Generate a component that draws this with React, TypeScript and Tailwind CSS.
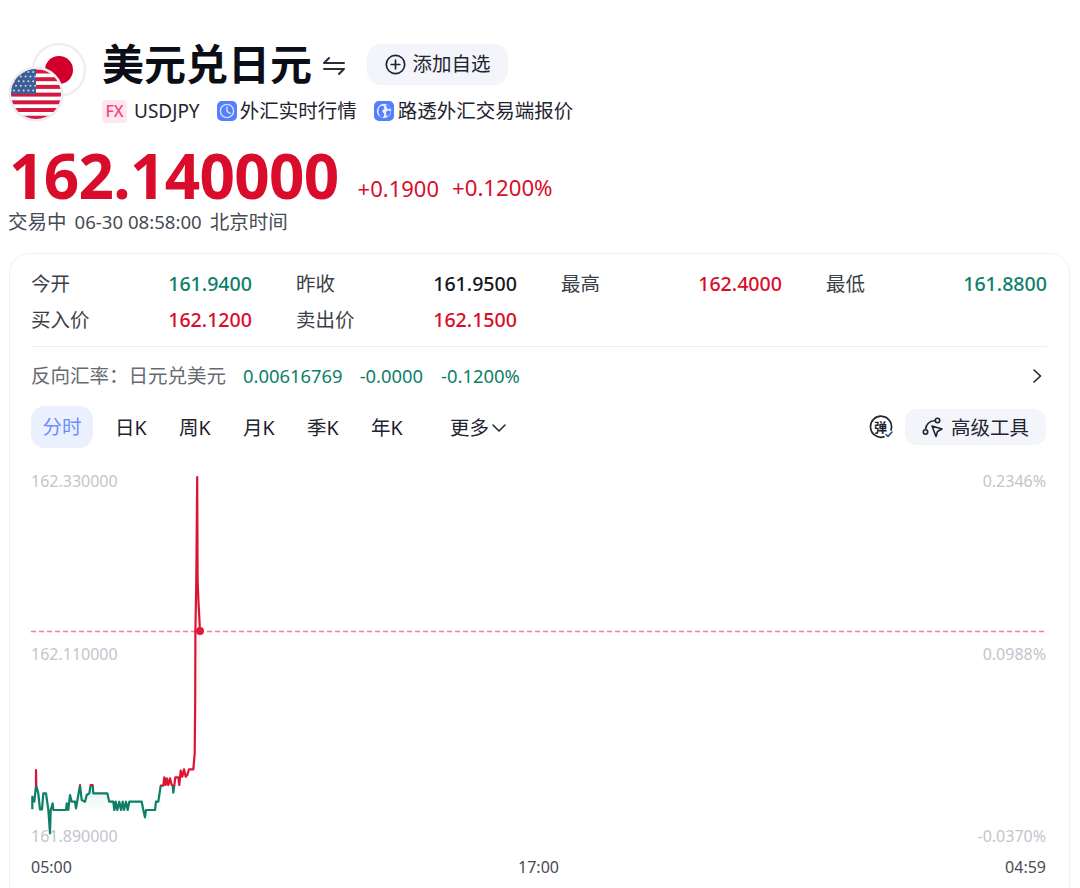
import React from "react";

const toAbs = (pts: number[][]) => pts.map(([x, y]) => [20 + x / 3, 740 + y / 3]);

const low = toAbs([
  [37, 208], [37, 170], [43, 185], [48, 137], [48, 90], [49, 137], [55, 160], [60, 208], [66, 208], [70, 160], [78, 160], [85, 208], [90, 280], [92, 210], [98, 190], [100, 210],
  [138, 210], [140, 190], [145, 210], [150, 165], [155, 185], [165, 185], [168, 205], [175, 165], [180, 135], [185, 180], [195, 185], [200, 165], [208, 160], [212, 135], [218, 135], [220, 160],
  [262, 160], [268, 185], [280, 185], [283, 210], [287, 185], [292, 210], [298, 185], [303, 210], [308, 185], [312, 210], [318, 185], [323, 210], [328, 185], [365, 185], [370, 210], [375, 232], [378, 210],
  [405, 210], [408, 185], [415, 185], [422, 137], [430, 137], [433, 112], [437, 135], [440, 115], [445, 135], [450, 115], [455, 135], [458, 137], [460, 158], [463, 137], [466, 112], [475, 112], [478, 135], [482, 92], [487, 110], [492, 88], [497, 110], [502, 105], [507, 88], [520, 88], [524, 40],
]);
const all = [...low, [195.2, 700], [195.4, 630], [196.3, 580], [197.2, 477], [197.6, 580], [198.4, 600], [200, 631]];
const line = all.map(([x, y], i) => `${i ? "L" : "M"}${x.toFixed(1)} ${y.toFixed(1)}`).join(" ");
const area = `${line} L200 850 L32 850 Z`;

function Flags() {
  return (
    <svg width="80" height="80" viewBox="0 0 80 80" className="shrink-0">
      <defs>
        <clipPath id="usa"><circle cx="28" cy="51" r="25" /></clipPath>
      </defs>
      <circle cx="51" cy="27" r="26" fill="#fff" stroke="#eeeeef" strokeWidth="2.5" />
      <circle cx="51" cy="27" r="14" fill="#d0002b" />
      <circle cx="28" cy="51" r="27.5" fill="#ecedf0" />
      <g clipPath="url(#usa)">
        <rect x="3" y="26" width="50" height="50" fill="#fff" />
        {[0, 1, 2, 3, 4, 5, 6].map((i) => (
          <rect key={i} x="3" y={26.5 + i * 7.7} width="50" height="4" fill="#d6193f" />
        ))}
        <rect x="3" y="26" width="25" height="25" fill="#3c5e94" />
        {[0, 1, 2, 3, 4].map((r) =>
          [0, 1, 2, 3, 4].map((c) => (
            <circle key={`${r}${c}`} cx={6 + c * 4.8 + (r % 2) * 2} cy={29 + r * 4.6} r="1" fill="#cfdaea" />
          ))
        )}
      </g>
    </svg>
  );
}

function Clock() {
  return (
    <svg width="20" height="20" viewBox="0 0 20 20" className="shrink-0">
      <rect width="20" height="20" rx="5" fill="#527eff" />
      <circle cx="10" cy="10" r="6.6" fill="none" stroke="#d5e0ff" strokeWidth="1.4" />
      <path d="M10 6V10.4L13.2 12.4" fill="none" stroke="#d5e0ff" strokeWidth="1.4" strokeLinecap="round" strokeLinejoin="round" />
    </svg>
  );
}

function Globe() {
  return (
    <svg width="20" height="20" viewBox="0 0 20 20" className="shrink-0">
      <rect width="20" height="20" rx="5" fill="#527eff" />
      <circle cx="10" cy="10" r="7.2" fill="#e6edff" />
      <path d="M6 5.4C8.6 3.8 10.6 5.2 10.2 7.2C9.8 9 8 8.8 8.4 10.4C8.8 12 10.6 12 10 14.4C9.7 15.6 9 16.6 8.2 16.8C5 15 3 9.4 6 5.4ZM12.2 3.4C14 3.9 15.6 5.2 16.4 7C15.2 8.8 13 8.2 12.8 6.6C12.7 5.6 12 4.6 12.2 3.4ZM13 10C14.2 9.6 16.4 10 17 10.6C16.6 12.8 15 14.8 13.2 15.6C12 14 11.6 11 13 10Z" fill="#527eff" />
    </svg>
  );
}

function Chevron({ className }: { className?: string }) {
  return (
    <svg width="16" height="16" viewBox="0 0 16 16" className={className}>
      <path d="M2 5L8 11L14 5" fill="none" stroke="#1f2430" strokeWidth="1.5" strokeLinecap="round" strokeLinejoin="round" />
    </svg>
  );
}

const stats = [
  ["今开", "161.9400", "text-[#0d7f68]"],
  ["昨收", "161.9500", "text-[#14171f]"],
  ["最高", "162.4000", "text-[#d90d2b]"],
  ["最低", "161.8800", "text-[#0d7f68]"],
  ["买入价", "162.1200", "text-[#d90d2b]"],
  ["卖出价", "162.1500", "text-[#d90d2b]"],
];

const tabs = ["日K", "周K", "月K", "季K", "年K"];

export default function App() {
  return (
    <div className="w-[1080px] h-[888px] overflow-hidden bg-white pl-[9px] pr-[10px] pt-[43px] text-[#1f2430] font-['Noto_Sans','Noto_Sans_CJK_SC',sans-serif]">
      <div className="flex h-[81px]">
        <div className="-ml-[1px] w-[94px] shrink-0"><Flags /></div>
        <div className="flex flex-col">
          <div className="flex items-center h-[42px]">
            <h1 className="text-[42px] leading-[42px] font-bold text-[#0b0e17]">美元兑日元</h1>
            <svg width="24" height="20" viewBox="0 0 24 20" className="ml-[10px] mt-[3px]">
              <path d="M7 2L2 7H22M17 18L22 13H2" fill="none" stroke="#2a2e38" strokeWidth="2" strokeLinecap="round" strokeLinejoin="round" />
            </svg>
            <button className="ml-[21px] h-[41px] w-[141px] rounded-[14px] bg-[#f3f5fa] flex items-center justify-center gap-[7px] text-[19.5px]">
              <svg width="21" height="21" viewBox="0 0 21 21">
                <circle cx="10.5" cy="10.5" r="9.2" fill="none" stroke="#1f2430" strokeWidth="1.7" />
                <path d="M10.5 6.2V14.8M6.2 10.5H14.8" stroke="#1f2430" strokeWidth="1.7" strokeLinecap="round" />
              </svg>
              添加自选
            </button>
          </div>
          <div className="flex items-center mt-[14px] h-[24px] text-[19.5px] leading-[24px] whitespace-nowrap">
            <span className="w-[25px] h-[23px] rounded-[4px] bg-[#ffe7ef] text-[#f2447f] text-[16px] leading-[23px] text-center font-medium">FX</span>
            <span className="ml-[7px] text-[19px]">USDJPY</span>
            <span className="ml-[17px]"><Clock /></span>
            <span className="ml-[3px]">外汇实时行情</span>
            <span className="ml-[17px]"><Globe /></span>
            <span className="ml-[4px]">路透外汇交易端报价</span>
          </div>
        </div>
      </div>

      <div className="flex items-start h-[60px] mt-[20px] text-[#d90d2b] whitespace-nowrap">
        <span className="text-[62px] leading-[62px] font-bold tracking-[-0.7px]">162.140000</span>
        <span className="ml-[19px] mt-[30px] text-[22px] leading-[28px]">+0.1900</span>
        <span className="ml-[13px] mt-[30px] text-[22.2px] leading-[28px]">+0.1200%</span>
      </div>
      <div className="flex mt-[5px] text-[19.5px] leading-[26px] text-[#474b55] whitespace-nowrap">
        <span className="-ml-[1px]">交易中</span>
        <span className="ml-[8px] text-[18.6px]">06-30 08:58:00</span>
        <span className="ml-[8px]">北京时间</span>
      </div>

      <div className="mt-[18px] rounded-[20px] border border-[#f1f1f3] pl-[21px] pr-[22px] pt-[16px] h-[700px]">
        <div className="grid grid-cols-4 gap-x-[44px] gap-y-[8px] pb-[12px] border-b border-[#eeeeef]">
          {stats.map(([label, value, color]) => (
            <div key={label} className="flex justify-between h-[28px] items-center">
              <span className="text-[#3c3f48] text-[19.5px]">{label}</span>
              <span className={`font-medium text-[19.6px] ${color}`}>{value}</span>
            </div>
          ))}
        </div>

        <div className="flex items-center h-[57px] text-[18.4px] whitespace-nowrap">
          <span className="text-[#666a73] text-[19.5px]">反向汇率：日元兑美元</span>
          <span className="ml-[17px] text-[#0d7f68]">0.00616769</span>
          <span className="ml-[17px] text-[#0d7f68]">-0.0000</span>
          <span className="ml-[18px] text-[#0d7f68]">-0.1200%</span>
          <svg width="12" height="16" viewBox="0 0 12 16" className="ml-auto mr-[4px]">
            <path d="M3 2L9.5 8L3 14" fill="none" stroke="#1f2430" strokeWidth="1.6" strokeLinecap="round" strokeLinejoin="round" />
          </svg>
        </div>

        <div className="flex items-center h-[42px] mt-[2px] text-[19.5px] whitespace-nowrap">
          <span className="w-[62px] h-[42px] rounded-[14px] bg-[#ebf0ff] text-[#6d8dfb] flex items-center justify-center">分时</span>
          <div className="flex ml-[22px] gap-[32px] pt-[2px]">
            {tabs.map((t) => (
              <span key={t} className="w-[32px]">{t}</span>
            ))}
          </div>
          <span className="ml-[47px] pt-[2px]">更多</span>
          <Chevron className="ml-[2px] mt-[2px]" />
          <svg width="24" height="24" viewBox="0 0 24 24" className="ml-auto mr-[12px]">
            <path d="M15 21.8A10.5 10.5 0 1 1 22 15" fill="none" stroke="#1f2430" strokeWidth="1.7" strokeLinecap="round" />
            <path d="M17 19.5L19 21.5L23 17" fill="none" stroke="#2b4a8c" strokeWidth="1.6" strokeLinecap="round" strokeLinejoin="round" />
            <text x="11.5" y="16.5" textAnchor="middle" fontSize="13" fontWeight="700" fill="#1f2430">弹</text>
          </svg>
          <div className="w-[141px] mr-[1px] h-[36px] rounded-[12px] bg-[#f3f5fa] flex items-center justify-center gap-[7px] pt-[1px]">
            <svg width="22" height="22" viewBox="0 0 22 22">
              <circle cx="15.5" cy="3.5" r="2.2" fill="none" stroke="#1f2430" strokeWidth="1.6" />
              <circle cx="3.5" cy="15" r="2.2" fill="none" stroke="#1f2430" strokeWidth="1.6" />
              <path d="M13 3.5C7.5 4 4 7.5 3.5 12.7" fill="none" stroke="#1f2430" strokeWidth="1.6" />
              <path d="M10 9L20 12L15.5 14.5L14 19.5Z" fill="none" stroke="#1f2430" strokeWidth="1.6" strokeLinejoin="round" />
            </svg>
            高级工具
          </div>
        </div>

        <div className="relative h-[380px] mt-[22px] w-[1015px]">
          <svg width="1015" height="380" viewBox="31 470 1015 380" className="block">
            <defs>
              <linearGradient id="fillG" gradientUnits="userSpaceOnUse" x1="0" y1="786" x2="0" y2="812">
                <stop offset="0" stopColor="#0d7f68" stopOpacity="0.12" />
                <stop offset="1" stopColor="#0d7f68" stopOpacity="0" />
              </linearGradient>
              <linearGradient id="fillR" gradientUnits="userSpaceOnUse" x1="0" y1="477" x2="0" y2="786">
                <stop offset="0" stopColor="#d90d2b" stopOpacity="0.1" />
                <stop offset="1" stopColor="#d90d2b" stopOpacity="0" />
              </linearGradient>
              <clipPath id="above"><rect x="31" y="470" width="200" height="316" /></clipPath>
              <clipPath id="below"><rect x="31" y="786" width="200" height="64" /></clipPath>
              <clipPath id="belowFill"><rect x="31" y="786" width="130" height="30" /></clipPath>
            </defs>
            <path d={area} fill="url(#fillG)" clipPath="url(#belowFill)" />
            <path d={area} fill="url(#fillR)" clipPath="url(#above)" />
            <line x1="31" y1="631.5" x2="1046" y2="631.5" stroke="#f2808c" strokeWidth="1.4" strokeDasharray="5 3" />
            <path d={line} fill="none" stroke="#dc1434" strokeWidth="2.2" strokeLinejoin="round" clipPath="url(#above)" />
            <path d={line} fill="none" stroke="#0d7f68" strokeWidth="2.2" strokeLinejoin="round" clipPath="url(#below)" />
            <circle cx="200" cy="631" r="4" fill="#e0193f" />
          </svg>
          <div className="absolute inset-0 text-[16px] leading-[22px] text-[#c2c5cd]">
            <span className="absolute left-0 top-0">162.330000</span>
            <span className="absolute left-0 top-[173px]">162.110000</span>
            <span className="absolute left-0 top-[355px]">161.890000</span>
            <span className="absolute right-0 top-0">0.2346%</span>
            <span className="absolute right-0 top-[173px]">0.0988%</span>
            <span className="absolute right-0 top-[355px]">-0.0370%</span>
          </div>
        </div>
        <div className="flex justify-between mt-[6px] text-[16px] leading-[22px] text-[#474b55] w-[1015px]">
          <span>05:00</span>
          <span>17:00</span>
          <span>04:59</span>
        </div>
      </div>
    </div>
  );
}
